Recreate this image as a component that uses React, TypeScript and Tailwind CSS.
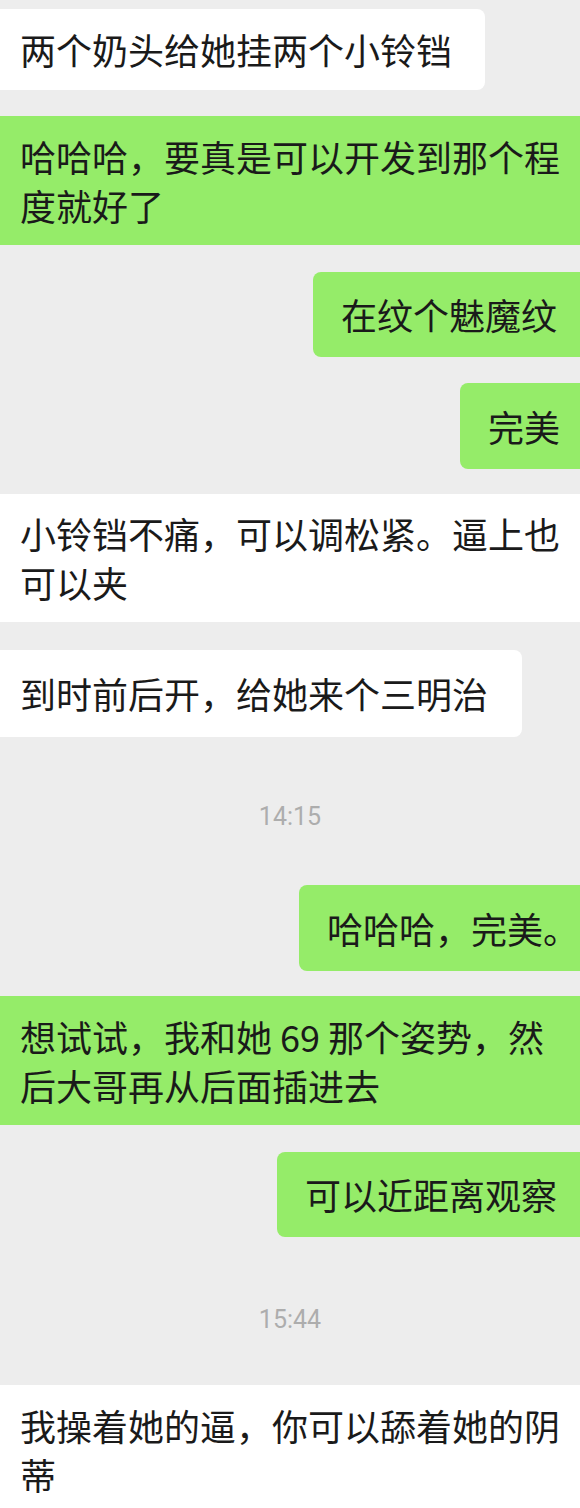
import React from 'react';

type Msg =
  | { kind: 'in' | 'out'; lines: string[]; mt: string; h: string; w: string }
  | { kind: 'time'; text: string; mt: string };

const messages: Msg[] = [
  { kind: 'in', lines: ['两个奶头给她挂两个小铃铛'], mt: 'mt-[9px]', h: 'h-[81px]', w: 'w-[485px]' },
  { kind: 'out', lines: ['哈哈哈，要真是可以开发到那个程', '度就好了'], mt: 'mt-[26px]', h: 'h-[129px]', w: 'w-[580px]' },
  { kind: 'out', lines: ['在纹个魅魔纹'], mt: 'mt-[27px]', h: 'h-[85px]', w: 'w-[267px]' },
  { kind: 'out', lines: ['完美'], mt: 'mt-[26px]', h: 'h-[86px]', w: 'w-[120px]' },
  { kind: 'in', lines: ['小铃铛不痛，可以调松紧。逼上也', '可以夹'], mt: 'mt-[25px]', h: 'h-[128px]', w: 'w-[580px]' },
  { kind: 'in', lines: ['到时前后开，给她来个三明治'], mt: 'mt-[28px]', h: 'h-[87px]', w: 'w-[522px]' },
  { kind: 'time', text: '14:15', mt: 'mt-[65px]' },
  { kind: 'out', lines: ['哈哈哈，完美。'], mt: 'mt-[53px]', h: 'h-[86px]', w: 'w-[281px]' },
  { kind: 'out', lines: ['想试试，我和她 69 那个姿势，然', '后大哥再从后面插进去'], mt: 'mt-[25px]', h: 'h-[129px]', w: 'w-[580px]' },
  { kind: 'out', lines: ['可以近距离观察'], mt: 'mt-[27px]', h: 'h-[85px]', w: 'w-[303px]' },
  { kind: 'time', text: '15:44', mt: 'mt-[68px]' },
  { kind: 'in', lines: ['我操着她的逼，你可以舔着她的阴', '蒂'], mt: 'mt-[50px]', h: 'h-[129px]', w: 'w-[580px]' },
];

function Bubble({ msg }: { msg: Exclude<Msg, { kind: 'time' }> }) {
  const full = msg.w === 'w-[580px]';
  const isOut = msg.kind === 'out';
  const side = isOut ? 'self-end' : 'self-start';
  const bg = isOut ? 'bg-[#95ec69]' : 'bg-white';
  const radius = full ? '' : isOut ? 'rounded-l-[8px]' : 'rounded-r-[8px]';
  const pad = isOut && !full ? 'pl-[28px]' : 'pl-[20px]';

  return (
    <div
      className={`${msg.mt} ${msg.h} ${msg.w} ${side} ${bg} ${radius} ${pad} shrink-0 flex items-center overflow-hidden`}
    >
      <p className="whitespace-nowrap text-[36px] leading-[49px] text-[#1a1a1a]">
        {msg.lines.map((line, i) => (
          <React.Fragment key={i}>
            {i > 0 && <br />}
            {line}
          </React.Fragment>
        ))}
      </p>
    </div>
  );
}

export default function App() {
  return (
    <div
      className="w-[580px] h-[1508px] overflow-hidden bg-[#ededed] flex flex-col"
      style={{ fontFamily: '"Noto Sans CJK SC", "Noto Sans", sans-serif' }}
    >
      {messages.map((msg, i) =>
        msg.kind === 'time' ? (
          <div
            key={i}
            className={`${msg.mt} h-[30px] shrink-0 flex items-center justify-center text-[25px] text-[#adadad] font-['Roboto',sans-serif]`}
          >
            {msg.text}
          </div>
        ) : (
          <Bubble key={i} msg={msg} />
        )
      )}
    </div>
  );
}
